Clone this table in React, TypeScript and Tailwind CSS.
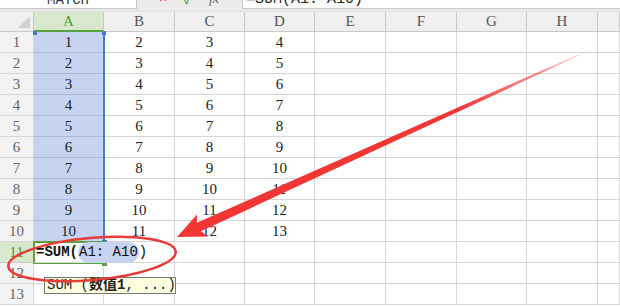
import React from 'react';

const COLS = ['A', 'B', 'C', 'D', 'E', 'F', 'G', 'H', ''];
const serif = { fontFamily: '"Liberation Serif", "Noto Sans CJK SC", serif' };
const mono = { fontFamily: '"Liberation Mono", "Noto Sans CJK SC", monospace' };

// rows 1-10: A..D hold n, n+1, n+2, n+3
const rows = Array.from({ length: 10 }, (_, i) => [i + 1, i + 2, i + 3, i + 4]);

const FormulaBar: React.FC = () => (
  <div className="flex h-[10px] overflow-hidden bg-[#ebebeb]" style={mono}>
    <div className="w-[137px] h-[9px] bg-white border-r border-b border-[#c8c8c8] flex justify-center">
      <span className="block text-[14px] leading-[14px] -mt-[7px] text-[#333]">MATCH</span>
    </div>
    <div className="w-[105px] h-[9px] flex items-start text-[14px] leading-[14px]">
      <span className="block -mt-[8px] ml-[22px] text-[#e23b3b]">×</span>
      <span className="block -mt-[7px] ml-[16px] text-[#3a9a3a]">✓</span>
      <span className="block -mt-[8px] ml-[16px] italic text-[#666]" style={serif}>fx</span>
    </div>
    <div className="flex-1 h-[9px] bg-white border-l border-b border-[#c8c8c8]">
      <span className="block ml-[3px] text-[15px] leading-[14px] -mt-[7px] text-[#222] whitespace-nowrap">
        =SUM(A1: A10)
      </span>
    </div>
  </div>
);

const HeaderRow: React.FC = () => (
  <>
    <div className="h-[20px] bg-[#efefef] border-r border-b border-[#c9c9c9] relative">
      <div className="absolute right-[3px] bottom-[3px] w-0 h-0 border-l-[12px] border-l-transparent border-b-[12px] border-b-[#d2d2d2]" />
    </div>
    {COLS.map((c, i) =>
      c === 'A' ? (
        <div
          key={i}
          className="h-[20px] bg-[#d8e8cc] border-r border-[#c9c9c9] border-b-2 border-b-[#5aa33a] flex items-center justify-center text-[15px] text-[#4f9a2d]"
        >
          {c}
        </div>
      ) : (
        <div
          key={i}
          className="h-[20px] bg-[#efefef] border-r border-b border-[#c9c9c9] flex items-center justify-center text-[15px] text-[#555]"
        >
          {c}
        </div>
      )
    )}
  </>
);

const RowHead: React.FC<{ n: number; active?: boolean }> = ({ n, active }) => (
  <div
    className={
      active
        ? 'h-[21px] bg-[#d8e8cc] border-r border-b border-[#c9c9c9] flex items-center justify-center text-[15px] text-[#4f9a2d]'
        : 'h-[21px] bg-[#f3f3f3] border-r border-b border-[#d6d6d6] flex items-center justify-center text-[15px] text-[#666]'
    }
  >
    {n}
  </div>
);

const Cell: React.FC<{ v?: number | string; sel?: boolean }> = ({ v, sel }) => (
  <div
    className={
      sel
        ? 'h-[21px] bg-[#c6d3f1] border-r border-b border-[#a9b7d8] flex items-center justify-center text-[15px] text-[#222]'
        : 'h-[21px] border-r border-b border-[#d6d6d6] flex items-center justify-center text-[15px] text-[#222]'
    }
  >
    {v}
  </div>
);

const Overlays: React.FC = () => (
  <svg className="absolute inset-0 pointer-events-none" width={620} height={306} viewBox="0 0 620 306">
    <defs>
      <linearGradient id="arrowFade" gradientUnits="userSpaceOnUse" x1="592" y1="49" x2="177" y2="237">
        <stop offset="0" stopColor="#f23636" stopOpacity="0" />
        <stop offset="0.12" stopColor="#f23636" stopOpacity="0.55" />
        <stop offset="0.32" stopColor="#f23636" stopOpacity="1" />
        <stop offset="1" stopColor="#f23636" stopOpacity="1" />
      </linearGradient>
    </defs>
    {/* ring around the formula cell */}
    <ellipse
      cx="92"
      cy="259"
      rx="84"
      ry="21"
      transform="rotate(-5 92 259)"
      fill="none"
      stroke="#e63c3a"
      strokeWidth="2.5"
    />
    {/* long tapered pointer */}
    <polygon
      points="177,237 208,236.4 201,231.2 592.2,49.5 591.8,48.5 196.8,222.8 197,214.4"
      fill="url(#arrowFade)"
    />
  </svg>
);

const App: React.FC = () => {
  return (
    <div className="relative w-[620px] h-[306px] overflow-hidden bg-white" style={serif}>
      <FormulaBar />
      <div className="h-[2px] bg-[#e6e6e6]" />
      <div className="grid grid-cols-[34px_70px_71px_70px_70px_71px_71px_70px_71px_1fr]">
        <HeaderRow />
        {rows.map((r, i) => (
          <React.Fragment key={i}>
            <RowHead n={i + 1} />
            <Cell v={r[0]} sel />
            <Cell v={r[1]} />
            <Cell v={r[2]} />
            <Cell v={r[3]} />
            <Cell />
            <Cell />
            <Cell />
            <Cell />
            <Cell />
          </React.Fragment>
        ))}
        {/* row 11: formula being typed */}
        <RowHead n={11} active />
        <div className="relative z-10 h-[21px] border-r border-b border-[#d6d6d6]">
          <div
            className="absolute left-[2px] top-0 h-[20px] flex items-center whitespace-nowrap text-[14px] text-[#111]"
            style={mono}
          >
            <span className="font-bold">=SUM(</span>
            <span className="bg-[#c6d3f1] rounded-full px-[1px]">A1: A10</span>
            <span>)</span>
          </div>
        </div>
        {Array.from({ length: 8 }, (_, i) => (
          <Cell key={i} />
        ))}
        {[12, 13].map(n => (
          <React.Fragment key={n}>
            <RowHead n={n} />
            {Array.from({ length: 9 }, (_, i) => (
              <Cell key={i} />
            ))}
          </React.Fragment>
        ))}
      </div>

      {/* selection frame A1:A10 */}
      <div className="absolute left-[34px] top-[32px] w-[71px] h-[210px] border-r-2 border-[#4a78d8] pointer-events-none" />
      <div className="absolute left-[33px] top-[31px] w-[4px] h-[4px] bg-[#4a78d8]" />
      <div className="absolute left-[102px] top-[31px] w-[4px] h-[4px] bg-[#4a78d8]" />
      <div className="absolute left-[102px] top-[240px] w-[5px] h-[4px] bg-[#4a78d8]" />

      {/* active cell A11 */}
      <div className="absolute left-[33px] top-[241px] w-[72px] h-[23px] border-2 border-[#5aa33a] pointer-events-none" />
      <div className="absolute left-[102px] top-[261px] w-[5px] h-[5px] bg-[#5aa33a]" />

      {/* argument hint */}
      <div
        className="absolute left-[44px] top-[277px] h-[17px] w-[132px] bg-[#ffffe1] border border-[#777] flex items-center px-[2px] text-[14px] text-[#222] whitespace-nowrap"
        style={mono}
      >
        SUM (<span className="font-bold">数值1</span>, ...)
      </div>

      <Overlays />
    </div>
  );
};

export default App;
